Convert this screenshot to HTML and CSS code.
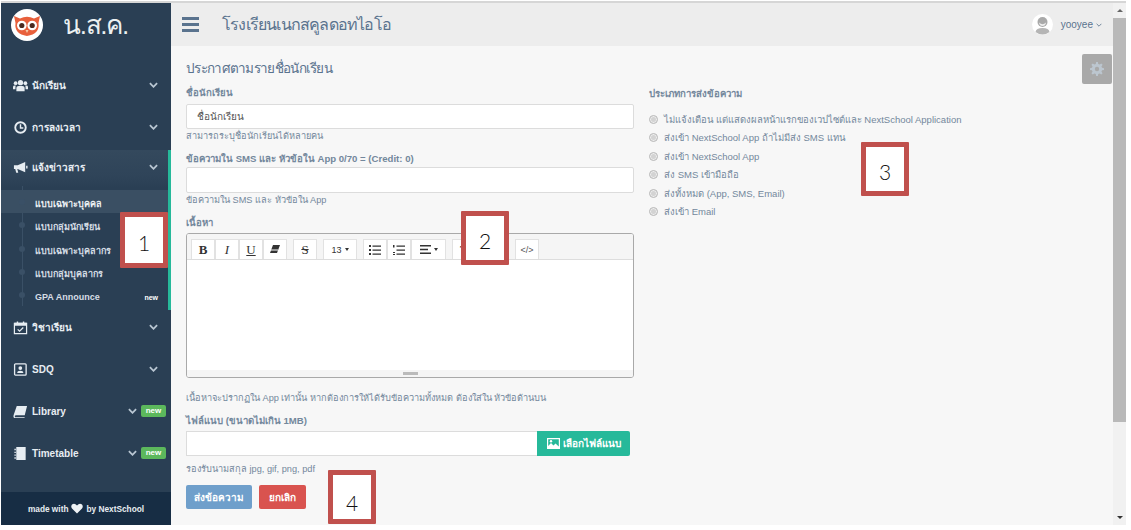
FILE: index.html
```html
<!DOCTYPE html>
<html lang="th">
<head>
  <meta charset="UTF-8">
  <title>NextSchool</title>
  <link rel="stylesheet" href="styles.css">
</head>
<body>
<div class="frame">

  <!-- sidebar -->
  <aside class="sidebar">
    <div class="brand">
      <span class="logo">
        <svg width="30" height="30" viewBox="0 0 30 30">
          <path d="M2 6 L8 8.500 Q15 5 22 8.500 L28 6 L26.500 13 Q28 24 15 26 Q2 24 3.500 13 Z" fill="#e8603c"/>
          <circle cx="9.800" cy="15.500" r="4.800" fill="#fff"/>
          <circle cx="20.200" cy="15.500" r="4.800" fill="#fff"/>
          <circle cx="9.800" cy="15.500" r="2.600" fill="#4a2a20"/>
          <circle cx="20.200" cy="15.500" r="2.600" fill="#4a2a20"/>
          <path d="M13.500 20 L16.500 20 L15 23 Z" fill="#f3c9a8"/>
        </svg>
      </span>
      <span class="brand-name">น.ส.ค.</span>
    </div>

    <nav class="menu">
      <div class="menu-item">
        <svg class="menu-icon" viewBox="0 0 16 16"><circle cx="8" cy="5" r="2.800"/><circle cx="2.800" cy="5.500" r="2"/><circle cx="13.200" cy="5.500" r="2"/><path d="M3.600 14V10.500Q3.600 8.400 6 8.400H10Q12.400 8.400 12.400 10.500V14ZM0 12V9.500Q0 8 2 8H3Q2.600 9 2.600 10.500V12ZM16 12V9.500Q16 8 14 8H13Q13.400 9 13.400 10.500V12Z"/></svg>
        <span class="menu-text">นักเรียน</span>
        <svg class="chev" viewBox="0 0 10 6"><path d="M1 1L5 5L9 1"/></svg>
      </div>
      <div class="menu-item">
        <svg class="menu-icon" viewBox="0 0 16 16"><circle cx="8" cy="8" r="5.600" fill="none" stroke="#e7edf2" stroke-width="2"/><path d="M8 4.500V8.600H11" fill="none" stroke="#e7edf2" stroke-width="1.500"/></svg>
        <span class="menu-text">การลงเวลา</span>
        <svg class="chev" viewBox="0 0 10 6"><path d="M1 1L5 5L9 1"/></svg>
      </div>

      <div class="menu-group">
        <div class="menu-item">
          <svg class="menu-icon" viewBox="0 0 16 16"><path d="M1 5.500H5L13 2V13L5 9.500H4.600L5.600 13.500H3.400L2.400 9.500H1Z"/><path d="M14 6H15.500V9H14Z"/></svg>
          <span class="menu-text">แจ้งข่าวสาร</span>
          <svg class="chev" viewBox="0 0 10 6"><path d="M1 1L5 5L9 1"/></svg>
        </div>
        <ul class="submenu">
          <li class="sub-item active">แบบเฉพาะบุคคล</li>
          <li class="sub-item">แบบกลุ่มนักเรียน</li>
          <li class="sub-item">แบบเฉพาะบุคลากร</li>
          <li class="sub-item">แบบกลุ่มบุคลากร</li>
          <li class="sub-item">GPA Announce <span class="new-plain">new</span></li>
        </ul>
      </div>

      <div class="menu-item flush">
        <svg class="menu-icon" viewBox="0 0 16 16"><path d="M1.500 3.500H14.500V14.500H1.500Z" fill="none" stroke="#e7edf2" stroke-width="1.300"/><path d="M1.500 3H14.500V6H1.500ZM4 1.500H5.500V4H4ZM10.500 1.500H12V4H10.500Z"/><path d="M5 10L7 12L11 8" fill="none" stroke="#e7edf2" stroke-width="1.300"/></svg>
        <span class="menu-text">วิชาเรียน</span>
        <svg class="chev" viewBox="0 0 10 6"><path d="M1 1L5 5L9 1"/></svg>
      </div>
      <div class="menu-item">
        <svg class="menu-icon" viewBox="0 0 16 16"><rect x="1.700" y="2" width="12.300" height="12" rx="1" fill="none" stroke="#e7edf2" stroke-width="1.400"/><circle cx="7.800" cy="6.500" r="2"/><path d="M4.500 11.800Q4.500 9.300 7.800 9.300Q11 9.300 11 11.800Z"/></svg>
        <span class="menu-text latin">SDQ</span>
        <svg class="chev" viewBox="0 0 10 6"><path d="M1 1L5 5L9 1"/></svg>
      </div>
      <div class="menu-item">
        <svg class="menu-icon" viewBox="0 0 16 16"><path d="M4 2H15L12.500 12H3Q1.500 12 2 14H12.500L12.200 15H2Q0 15 .6 12Z"/></svg>
        <span class="menu-text latin">Library</span>
        <svg class="chev short" viewBox="0 0 10 6"><path d="M1 1L5 5L9 1"/></svg>
        <span class="badge">new</span>
      </div>
      <div class="menu-item">
        <svg class="menu-icon" viewBox="0 0 16 16"><path d="M3.500 1H13.500V15H3.500ZM1.500 3H3V4.500H1.500ZM1.500 6H3V7.500H1.500ZM1.500 9H3V10.500H1.500ZM1.500 12H3V13.500H1.500Z"/></svg>
        <span class="menu-text latin">Timetable</span>
        <svg class="chev short" viewBox="0 0 10 6"><path d="M1 1L5 5L9 1"/></svg>
        <span class="badge">new</span>
      </div>
    </nav>

    <div class="side-foot">made with
      <svg width="12" height="11" viewBox="0 0 12 11"><path d="M6 10.500L1 5.500Q-.5 3.500 1 1.500Q3.500-.5 6 2.500Q8.500-.5 11 1.500Q12.500 3.500 11 5.500Z" fill="#eef2f5"/></svg>
      by NextSchool</div>
  </aside>

  <!-- main -->
  <div class="main">
    <header class="topbar">
      <div class="burger"><i></i><i></i><i></i></div>
      <div class="school">โรงเรียนเนกสคูลดอทไอโอ</div>
      <div class="user">
        <svg class="avatar" width="21" height="21" viewBox="0 0 21 21"><circle cx="10.500" cy="10.500" r="10.500" fill="#fff"/><circle cx="10.500" cy="8" r="5" fill="#a9a9a9"/><path d="M7 8.500Q10.500 12 14 8.500Q13.500 12 10.500 12Q7.500 12 7 8.500Z" fill="#eee"/><path d="M3.500 18Q4 14 10.500 14Q17 14 17.500 18Q14 20.500 10.500 20.500Q7 20.500 3.500 18Z" fill="#b5b5b5"/></svg>
        <span class="user-name">yooyee</span>
        <svg class="user-chev" viewBox="0 0 10 6"><path d="M1 1L5 5L9 1"/></svg>
      </div>
    </header>

    <div class="content">
      <button class="gear" type="button">
        <svg width="14" height="14" viewBox="0 0 16 16"><path d="M7 0H9L9.400 2.200L11 2.900L12.900 1.600L14.400 3.100L13.100 5L13.800 6.600L16 7V9L13.800 9.400L13.100 11L14.400 12.900L12.900 14.400L11 13.100L9.400 13.800L9 16H7L6.600 13.800L5 13.100L3.100 14.400L1.600 12.900L2.900 11L2.200 9.400L0 9V7L2.200 6.600L2.900 5L1.600 3.100L3.100 1.600L5 2.900L6.600 2.200ZM8 5.500A2.500 2.500 0 1 0 8 10.500A2.500 2.500 0 1 0 8 5.500Z" fill="#bcc6cf" fill-rule="evenodd"/></svg>
      </button>

      <h2 class="page-title">ประกาศตามรายชื่อนักเรียน</h2>

      <div class="columns">
        <form class="col-left">
          <label class="lbl">ชื่อนักเรียน</label>
          <input class="field" type="text" placeholder="ชื่อนักเรียน">
          <p class="help">สามารถระบุชื่อนักเรียนได้หลายคน</p>

          <label class="lbl lbl-gap">ข้อความใน SMS และ หัวข้อใน App 0/70 = (Credit: 0)</label>
          <input class="field tall" type="text">
          <p class="help">ข้อความใน SMS และ หัวข้อใน App</p>

          <label class="lbl lbl-gap">เนื้อหา</label>
          <div class="editor">
            <div class="toolbar">
              <div class="tool-group">
                <span class="tool serif"><b>B</b></span>
                <span class="tool serif"><i>I</i></span>
                <span class="tool serif"><u>U</u></span>
                <span class="tool"><svg width="10" height="9" viewBox="0 0 10 9"><path d="M3 0H10L7 8H0Z" fill="#333"/><path d="M.6 5H8" stroke="#fff"/></svg></span>
              </div>
              <div class="tool-group"><span class="tool serif"><s>S</s></span></div>
              <div class="tool-group"><span class="tool wide-34">13<em class="caret"></em></span></div>
              <div class="tool-group">
                <span class="tool"><svg width="12" height="10" viewBox="0 0 12 10"><path d="M0 0H2V2H0ZM0 4H2V6H0ZM0 8H2V10H0ZM3.500 .5H12V1.800H3.500ZM3.500 4.500H12V5.800H3.500ZM3.500 8.500H12V9.800H3.500Z" fill="#333"/></svg></span>
                <span class="tool"><svg width="12" height="10" viewBox="0 0 12 10"><path d="M0 0H1.500V2.500H0ZM0 7H2V8H0ZM0 9H2V10H0ZM3.500 .5H12V1.800H3.500ZM3.500 4.500H12V5.800H3.500ZM3.500 8.500H12V9.800H3.500Z" fill="#333"/></svg></span>
                <span class="tool wide-35"><svg width="11" height="9" viewBox="0 0 11 9"><path d="M0 0H11V1.400H0ZM0 3.800H8V5.200H0ZM0 7.600H11V9H0Z" fill="#333"/></svg><em class="caret"></em></span>
              </div>
              <div class="tool-group">
                <span class="tool serif">T</span>
                <span class="tool"></span>
              </div>
              <div class="tool-group last"><span class="tool code">&lt;/&gt;</span></div>
            </div>
            <div class="editor-body"></div>
            <div class="editor-resize"><i></i></div>
          </div>

          <p class="help note">เนื้อหาจะปรากฏใน App เท่านั้น หากต้องการให้ได้รับข้อความทั้งหมด ต้องใส่ใน หัวข้อด้านบน</p>

          <label class="lbl file-lbl">ไฟล์แนบ (ขนาดไม่เกิน 1MB)</label>
          <div class="file-row">
            <input class="field file-input" type="text">
            <button class="btn btn-file" type="button">
              <svg width="13" height="11" viewBox="0 0 13 11"><path d="M0 0H13V11H0ZM1.200 1.200V8L4 5L6.500 7.500L8.500 5.500L11.800 8.500V1.200Z" fill="#fff" fill-rule="evenodd"/><circle cx="4" cy="3.200" r="1.200" fill="#fff"/></svg>
              เลือกไฟล์แนบ</button>
          </div>
          <p class="help ext">รองรับนามสกุล jpg, gif, png, pdf</p>
          <div class="actions">
            <button class="btn btn-send" type="button">ส่งข้อความ</button>
            <button class="btn btn-cancel" type="button">ยกเลิก</button>
          </div>
        </form>

        <div class="col-right">
          <div class="lbl">ประเภทการส่งข้อความ</div>
          <ul class="radios">
            <li><i class="radio"></i>ไม่แจ้งเตือน แต่แสดงผลหน้าแรกของเวปไซต์และ NextSchool Application</li>
            <li><i class="radio"></i>ส่งเข้า NextSchool App ถ้าไม่มีส่ง SMS แทน</li>
            <li><i class="radio"></i>ส่งเข้า NextSchool App</li>
            <li><i class="radio"></i>ส่ง SMS เข้ามือถือ</li>
            <li><i class="radio"></i>ส่งทั้งหมด (App, SMS, Email)</li>
            <li><i class="radio"></i>ส่งเข้า Email</li>
          </ul>
        </div>
      </div>
    </div>
  </div>

  <div class="scrollbar">
    <span class="arrow up"></span>
    <span class="thumb"></span>
    <span class="arrow down"></span>
  </div>
</div>

<!-- numbered callouts laid over the screenshot -->
<div class="callout c1">1</div>
<div class="callout c2">2</div>
<div class="callout c3">3</div>
<div class="callout c4">4</div>

</body>
</html>
```

FILE: styles.css
```css
*{
	box-sizing: border-box;
}
html, body{
	margin: 0;
	height: 100%;
	overflow: hidden;
}
body{
	background: #fff;
	font-family: "Liberation Sans", "Noto Sans", "DejaVu Sans", sans-serif;
	font-size: 10px;
	color: #73879c;
}
.frame{
	display: flex;
	height: 524px;
	margin: 1px 5px 0 1px;
	border-top: 2px solid #d6d6d6;
}

/* sidebar */
.sidebar{
	width: 170px;
	flex: none;
	background: #2a3f54;
	color: #e7edf2;
	display: flex;
	flex-direction: column;
}
.brand{
	height: 46px;
	display: flex;
	align-items: center;
	padding: 0 0 3px 9px;
}
.logo{
	width: 32px;
	height: 32px;
	margin-left: 1px;
	border-radius: 50%;
	background: #fff;
	display: flex;
	align-items: center;
	justify-content: center;
	flex: none;
}
.brand-name{
	margin-left: 20px;
	font-size: 26px;
	letter-spacing: -1.300px;
	color: #ecf0f1;
}
.menu{
	flex: 1;
	padding-top: 11px;
}
.menu-item{
	height: 34px;
	margin-top: 8px;
	display: flex;
	align-items: center;
	padding: 0 13px 0 12px;
	font-size: 10px;
	font-weight: bold;
}
.menu-item.flush{
	margin-top: 0;
}
.menu-icon{
	width: 15px;
	height: 15px;
	fill: #e7edf2;
	flex: none;
	margin-right: 4px;
}
.menu-text{
	flex: 1;
}
.chev{
	width: 9px;
	height: 6px;
	fill: none;
	stroke: #b9c6d2;
	stroke-width: 2;
}
.chev.short{
	margin-right: 4px;
}
.badge{
	width: 25px;
	height: 12px;
	margin-right: -8px;
	background: #5cb85c;
	border-radius: 2px;
	color: #fff;
	font-size: 8px;
	font-weight: bold;
	line-height: 12px;
	text-align: center;
}
.menu-group{
	margin-top: 6px;
	height: 160px;
	border-right: 3px solid #26b99a;
	background: linear-gradient(#34495d, #2f4459 26px, #2a3f54 38px);
}
.menu-group .menu-item{
	margin-top: 2px;
	padding-right: 10px;
}
.submenu{
	list-style: none;
	margin: 2px 0 0;
	padding: 4px 0 0;
	position: relative;
}
.submenu::before{
	content: "";
	position: absolute;
	left: 21px;
	top: 0;
	bottom: 0;
	width: 1px;
	background: #3a5066;
}
.sub-item{
	height: 23.300px;
	display: flex;
	align-items: center;
	padding: 5px 10px 0 34px;
	font-size: 9px;
	font-weight: bold;
	color: #d5dde5;
	position: relative;
	white-space: nowrap;
}
.sub-item::before{
	content: "";
	position: absolute;
	left: 18px;
	top: 9px;
	width: 6px;
	height: 6px;
	border-radius: 50%;
	background: #3a5066;
}
.sub-item.active{
	background: #3a4f63;
	color: #eef2f5;
}
.new-plain{
	margin-left: auto;
	font-size: 7px;
	color: #fff;
}
.side-foot{
	height: 33px;
	flex: none;
	background: #172d44;
	color: #e7edf2;
	font-size: 8.300px;
	font-weight: bold;
	display: flex;
	align-items: center;
	justify-content: center;
	gap: 3px;
	white-space: nowrap;
}

/* top bar */
.main{
	flex: 1;
	min-width: 0;
	display: flex;
	flex-direction: column;
	background: #f7f7f7;
}
.topbar{
	height: 43px;
	flex: none;
	background: #ededed;
	display: flex;
	align-items: center;
	padding: 0 11px 0 11px;
}
.burger{
	width: 17px;
	display: flex;
	flex-direction: column;
	gap: 3px;
}
.burger i{
	height: 3px;
	background: #5a738e;
}
.school{
	flex: 1;
	margin-left: 23px;
	font-size: 16px;
	letter-spacing: -.8px;
	color: #5a738e;
}
.user{
	display: flex;
	align-items: center;
}
.user-name{
	margin-left: 8px;
	font-size: 10px;
	color: #5a738e;
}
.user-chev{
	width: 6px;
	height: 4px;
	margin-left: 3px;
	fill: none;
	stroke: #5a738e;
	stroke-width: 1.400;
}

/* content */
.content{
	flex: 1;
	position: relative;
	padding: 0 15px;
}
.gear{
	position: absolute;
	top: 8px;
	right: 1px;
	width: 30px;
	height: 30px;
	border: 0;
	border-radius: 2px;
	background: #a9a9a9;
	display: flex;
	align-items: center;
	justify-content: center;
	padding: 0;
}
.page-title{
	margin: 0;
	padding-top: 13px;
	height: 40px;
	font-size: 13.500px;
	letter-spacing: -.7px;
	line-height: 19px;
	font-weight: normal;
	color: #5a738e;
}
.columns{
	display: flex;
}
.col-left{
	width: 448px;
	flex: none;
}
.col-right{
	margin-left: 15px;
	flex: 1;
	padding-top: 1px;
}
.lbl{
	display: block;
	height: 14px;
	line-height: 14px;
	font-size: 9.600px;
	font-weight: bold;
	color: #73879c;
	white-space: nowrap;
}
.lbl-gap{
	margin-top: 9px;
}
.field{
	display: block;
	width: 100%;
	height: 25px;
	margin-top: 4px;
	padding: 0 10px;
	background: #fff;
	border: 1px solid #dcdcdc;
	border-radius: 2px;
	font-family: inherit;
	font-size: 10px;
}
.field.tall{
	height: 26px;
	margin-top: 1px;
}
.field::placeholder{
	color: #555;
}
.help{
	margin: 0;
	height: 13px;
	line-height: 13px;
	margin-top: 1px;
	font-size: 9.200px;
	color: #73879c;
	white-space: nowrap;
}
.editor{
	height: 145px;
	margin-top: 3px;
	background: #fff;
	border: 1px solid #a9a9a9;
	border-radius: 3px;
	display: flex;
	flex-direction: column;
	overflow: hidden;
}
.toolbar{
	height: 26px;
	flex: none;
	background: #f5f5f5;
	border-bottom: 1px solid #ddd;
	padding: 5px 0 0 4px;
	display: flex;
	gap: 6px;
}
.tool-group{
	display: flex;
}
.tool-group.last{
	margin-left: 9px;
}
.tool{
	width: 24px;
	height: 20px;
	background: #fff;
	border: 1px solid #e2e2e2;
	border-bottom: 0;
	display: flex;
	align-items: center;
	justify-content: center;
	font-size: 9px;
	color: #333;
}
.tool.serif{
	font-family: "Liberation Serif", serif;
	font-size: 13px;
}
.tool.wide-34{
	width: 34px;
}
.tool.wide-35{
	width: 35px;
}
.tool.code{
	color: #555;
}
.caret{
	width: 0;
	height: 0;
	margin-left: 3px;
	border: 2.500px solid transparent;
	border-top: 3px solid #333;
	border-bottom: 0;
}
.editor-body{
	flex: 1;
	background: #fff;
}
.editor-resize{
	height: 7px;
	flex: none;
	background: #f5f5f5;
	display: flex;
	align-items: center;
	justify-content: center;
}
.editor-resize i{
	width: 15px;
	height: 3px;
	background: #bbb;
}
.note{
	margin-top: 14px;
}
.file-lbl{
	margin-top: 9px;
}
.file-row{
	display: flex;
	width: 444px;
	margin-top: 3px;
}
.file-input{
	flex: 1;
	margin: 0;
	border-radius: 0;
	border-right: 0;
}
.btn{
	border: 0;
	border-radius: 2px;
	color: #fff;
	font-family: inherit;
	font-size: 10px;
	font-weight: bold;
	padding: 0;
}
.btn-file{
	width: 93px;
	height: 25px;
	background: #26b99a;
	border-radius: 0 2px 2px 0;
	display: flex;
	align-items: center;
	justify-content: center;
	gap: 3px;
}
.ext{
	margin-top: 7px;
}
.actions{
	display: flex;
	gap: 7px;
	margin-top: 9px;
}
.btn-send{
	width: 66px;
	height: 24px;
	background: #6f9fcb;
}
.btn-cancel{
	width: 47px;
	height: 24px;
	background: #d9534f;
}
.radios{
	list-style: none;
	margin: 9px 0 0;
	padding: 0;
}
.radios li{
	height: 18.500px;
	display: flex;
	align-items: center;
	font-size: 9.500px;
	color: #73879c;
	white-space: nowrap;
}
.radio{
	width: 9px;
	height: 9px;
	margin-right: 6px;
	border-radius: 50%;
	background: #d3d3d3;
	border: 1px solid #bcbcbc;
	box-shadow: inset 0 0 0 1px #eee;
}

/* scrollbar */
.scrollbar{
	width: 13px;
	flex: none;
	background: #f1f1f1;
	display: flex;
	flex-direction: column;
	align-items: center;
}
.arrow{
	width: 0;
	height: 0;
	margin: 6px 0;
	border: 3px solid transparent;
}
.arrow.up{
	border-bottom: 3px solid #666;
	border-top: 0;
}
.arrow.down{
	border-top: 3px solid #333;
	border-bottom: 0;
}
.thumb{
	width: 100%;
	height: 404px;
	background: #b9b9b9;
	margin-bottom: auto;
}

/* callouts */
.callout{
	position: absolute;
	width: 48px;
	height: 54px;
	padding-top: 4px;
	background: #fff;
	border: 5px solid #c0504d;
	border-radius: 1px;
	display: flex;
	align-items: center;
	justify-content: center;
	font-family: "Lato", sans-serif;
	font-weight: 300;
	font-size: 21px;
	color: #111;
}
.c1{
	left: 120px;
	top: 212px;
	height: 56px;
}
.c2{
	left: 461px;
	top: 211px;
}
.c3{
	left: 861px;
	top: 142px;
}
.c4{
	left: 328px;
	top: 470px;
	padding-top: 10px;
}
```
